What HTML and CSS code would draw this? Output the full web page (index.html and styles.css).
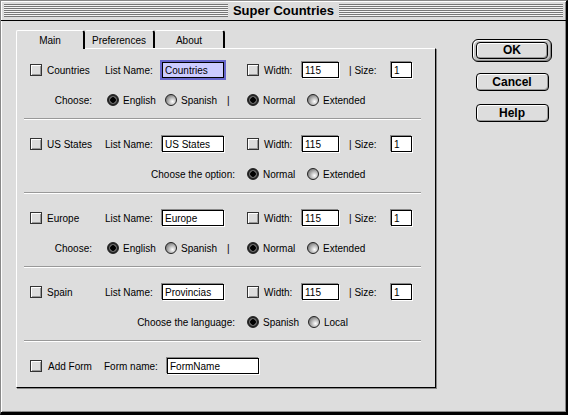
FILE: index.html
```html
<!DOCTYPE html>
<html lang="en">
<head>
    <meta charset="UTF-8">
    <title>Super Countries</title>
    <link rel="stylesheet" href="styles.css">
</head>
<body>
    <div class="window">
        <div class="titlebar">
            <div class="stripes"></div>
            <span class="title">Super Countries</span>
            <div class="stripes"></div>
        </div>
        <div class="dialog-body">
            <div class="tab-area">
                <div class="tabs">
                    <div class="tab tab-main active">Main</div>
                    <div class="tab tab-pref">Preferences</div>
                    <div class="tab tab-about">About</div>
                </div>
                <div class="panel">
                    <!-- Countries -->
                    <div class="line">
                        <label class="c-name"><span class="check"></span>Countries</label>
                        <span class="c-list">List Name:</span>
                        <span class="c-input"><input class="field focus w-list" type="text" value="Countries"></span>
                        <label class="c-width"><span class="check"></span>Width:</label>
                        <span class="c-winput"><input class="field w-num" type="text" value="115"></span>
                        <span class="c-size">| Size:</span>
                        <input class="field w-size" type="text" value="1">
                    </div>
                    <div class="line sub">
                        <span class="c-choose">Choose:</span>
                        <span class="opt w58"><span class="radio on"></span>English</span>
                        <span class="opt w62"><span class="radio"></span>Spanish</span>
                        <span class="c-bar">|</span>
                        <span class="opt w60"><span class="radio on"></span>Normal</span>
                        <span class="opt"><span class="radio"></span>Extended</span>
                    </div>
                    <div class="sep"></div>

                    <!-- US States -->
                    <div class="line">
                        <label class="c-name"><span class="check"></span>US States</label>
                        <span class="c-list">List Name:</span>
                        <span class="c-input"><input class="field w-list" type="text" value="US States"></span>
                        <label class="c-width"><span class="check"></span>Width:</label>
                        <span class="c-winput"><input class="field w-num" type="text" value="115"></span>
                        <span class="c-size">| Size:</span>
                        <input class="field w-size" type="text" value="1">
                    </div>
                    <div class="line sub">
                        <span class="c-choose wide">Choose the option:</span>
                        <span class="opt w60"><span class="radio on"></span>Normal</span>
                        <span class="opt"><span class="radio"></span>Extended</span>
                    </div>
                    <div class="sep"></div>

                    <!-- Europe -->
                    <div class="line">
                        <label class="c-name"><span class="check"></span>Europe</label>
                        <span class="c-list">List Name:</span>
                        <span class="c-input"><input class="field w-list" type="text" value="Europe"></span>
                        <label class="c-width"><span class="check"></span>Width:</label>
                        <span class="c-winput"><input class="field w-num" type="text" value="115"></span>
                        <span class="c-size">| Size:</span>
                        <input class="field w-size" type="text" value="1">
                    </div>
                    <div class="line sub">
                        <span class="c-choose">Choose:</span>
                        <span class="opt w58"><span class="radio on"></span>English</span>
                        <span class="opt w62"><span class="radio"></span>Spanish</span>
                        <span class="c-bar">|</span>
                        <span class="opt w60"><span class="radio on"></span>Normal</span>
                        <span class="opt"><span class="radio"></span>Extended</span>
                    </div>
                    <div class="sep"></div>

                    <!-- Spain -->
                    <div class="line">
                        <label class="c-name"><span class="check"></span>Spain</label>
                        <span class="c-list">List Name:</span>
                        <span class="c-input"><input class="field w-list" type="text" value="Provincias"></span>
                        <label class="c-width"><span class="check"></span>Width:</label>
                        <span class="c-winput"><input class="field w-num" type="text" value="115"></span>
                        <span class="c-size">| Size:</span>
                        <input class="field w-size" type="text" value="1">
                    </div>
                    <div class="line sub">
                        <span class="c-choose wide">Choose the language:</span>
                        <span class="opt w61"><span class="radio on"></span>Spanish</span>
                        <span class="opt"><span class="radio"></span>Local</span>
                    </div>
                    <div class="sep"></div>

                    <!-- Form -->
                    <div class="line">
                        <label class="c-name"><span class="check gap6"></span>Add Form</label>
                        <span class="c-form">Form name:</span>
                        <input class="field w-form" type="text" value="FormName">
                    </div>
                </div>
            </div>
            <div class="side">
                <div class="default-ring"><button class="btn btn-ok">OK</button></div>
                <button class="btn btn-cancel">Cancel</button>
                <button class="btn btn-help">Help</button>
            </div>
        </div>
    </div>
</body>
</html>
```

FILE: styles.css
```css
body {
  margin: 0;
  background-color: #fff;
  font-family: "Liberation Sans", Arial, sans-serif;
  font-size: 10px;
  color: #000;
}
.window {
  width: 568px;
  height: 415px;
  box-sizing: border-box;
  background-color: #dddddd;
  border-style: solid;
  border-width: 1px 2px 3px 1px;
  border-color: #888 #000 #000 #888;
  box-shadow: inset 1px 1px 0 #fff, inset -1px -1px 0 #888;
}
.titlebar {
  display: flex;
  align-items: center;
  box-sizing: border-box;
  height: 20px;
  padding: 3px 3px;
  border-bottom: 1px solid #000;
}
.stripes {
  flex: 1;
  height: 13px;
  background: repeating-linear-gradient(to bottom, #777 0 1px, #f4f4f4 1px 2px);
}
.title {
  padding: 0 5px;
  font-weight: bold;
  font-size: 13px;
  line-height: 13px;
}
.dialog-body {
  display: flex;
  padding: 9px 0 0 15px;
}
.tab-area {
  width: 420px;
}
.tabs {
  display: flex;
  height: 18px;
}
.tab {
  box-sizing: border-box;
  height: 18px;
  padding-top: 1px;
  border-top: 1px solid #fff;
  border-left: 1px solid #fff;
  border-right: 2px solid #000;
  border-radius: 2px 3px 0 0;
  text-align: center;
  line-height: 17px;
  background-color: #dddddd;
}
.tab-main {
  width: 69px;
}
.tab-pref {
  width: 70px;
  border-left: none;
}
.tab-about {
  width: 70px;
  border-left: none;
}
.tab.active {
  position: relative;
  z-index: 1;
  height: 19px;
  margin-bottom: -1px;
}
.panel {
  box-sizing: border-box;
  width: 420px;
  height: 340px;
  border: 1px solid;
  border-color: #fff #000 #000 #fff;
  box-shadow: 1px 1px 0 #888;
  padding-top: 12px;
}
.line {
  display: flex;
  align-items: center;
  height: 18px;
  padding-left: 13px;
  white-space: nowrap;
}
.line.sub {
  margin-top: 14px;
  height: 14px;
}
.sep {
  height: 0;
  border-top: 1px solid #999;
  border-bottom: 1px solid #fff;
  margin: 11px 14px 15px 7px;
}
.c-name,
.c-width {
  display: flex;
  align-items: center;
}
.c-name {
  width: 74px;
}
.c-list {
  width: 58px;
  padding-left: 1px;
  box-sizing: border-box;
}
.c-input {
  width: 85px;
}
.c-width {
  width: 55px;
}
.c-winput {
  width: 47px;
}
.c-size {
  width: 42px;
}
.c-form {
  width: 63px;
}
.check {
  display: inline-block;
  width: 12px;
  height: 12px;
  box-sizing: border-box;
  margin-right: 5px;
  border: 1px solid #333;
  background-color: #ddd;
  box-shadow: inset 1px 1px 0 #fff, inset -1px -1px 0 #999;
}
.check.gap6 {
  margin-right: 6px;
}
.field {
  box-sizing: border-box;
  height: 16px;
  margin: 0;
  padding: 0 2px;
  border: 1px solid #000;
  background-color: #fff;
  font-family: inherit;
  font-size: 10px;
  line-height: 14px;
  color: #000;
  box-shadow: -1px -1px 0 #888, 1px 1px 0 #fff;
  outline: none;
}
.field.focus {
  background-color: #ccccff;
  box-shadow: 0 0 0 2px #6666cc;
}
.w-list {
  width: 62px;
}
.w-num {
  width: 37px;
}
.w-size {
  width: 21px;
}
.w-form {
  width: 92px;
}
.c-choose {
  width: 77px;
  box-sizing: border-box;
  padding-right: 15px;
  text-align: right;
}
.c-choose.wide {
  width: 217px;
  padding-right: 12px;
}
.c-bar {
  width: 20px;
}
.opt {
  display: flex;
  align-items: center;
}
.w58 {
  width: 58px;
}
.w60 {
  width: 60px;
}
.w61 {
  width: 61px;
}
.w62 {
  width: 62px;
}
.radio {
  display: inline-block;
  width: 12px;
  height: 12px;
  box-sizing: border-box;
  margin-right: 4px;
  border: 1px solid #222;
  border-radius: 50%;
  background: radial-gradient(circle at 65% 65%, #fff 0, #d0d0d0 28%, #8c8c8c 68%, #5a5a5a 100%);
}
.radio.on {
  background: radial-gradient(circle, #000 0 2.5px, #666 3px 3.5px, #222 4.5px);
}
.side {
  display: flex;
  flex-direction: column;
  align-items: center;
  width: 80px;
  margin-left: 36px;
  padding-top: 9px;
}
.default-ring {
  box-sizing: border-box;
  width: 80px;
  height: 23px;
  border: 1px solid #000;
  border-radius: 6px;
  background-color: #c4c4c4;
  box-shadow: inset 1px 1px 0 #fff, inset -1px -1px 0 #888;
  display: flex;
  justify-content: center;
  align-items: center;
}
.btn {
  box-sizing: border-box;
  width: 73px;
  height: 18px;
  padding: 0;
  border: 1px solid #000;
  border-radius: 4px;
  background-color: #ddd;
  box-shadow: inset 1px 1px 0 #fff, inset -1px -1px 0 #999;
  font-family: "Liberation Sans", Arial, sans-serif;
  font-weight: bold;
  font-size: 12px;
  line-height: 16px;
  color: #000;
  text-align: center;
}
.btn-ok {
  width: 72px;
  height: 17px;
  line-height: 15px;
}
.btn-cancel {
  margin-top: 11px;
}
.btn-help {
  margin-top: 13px;
}
```
